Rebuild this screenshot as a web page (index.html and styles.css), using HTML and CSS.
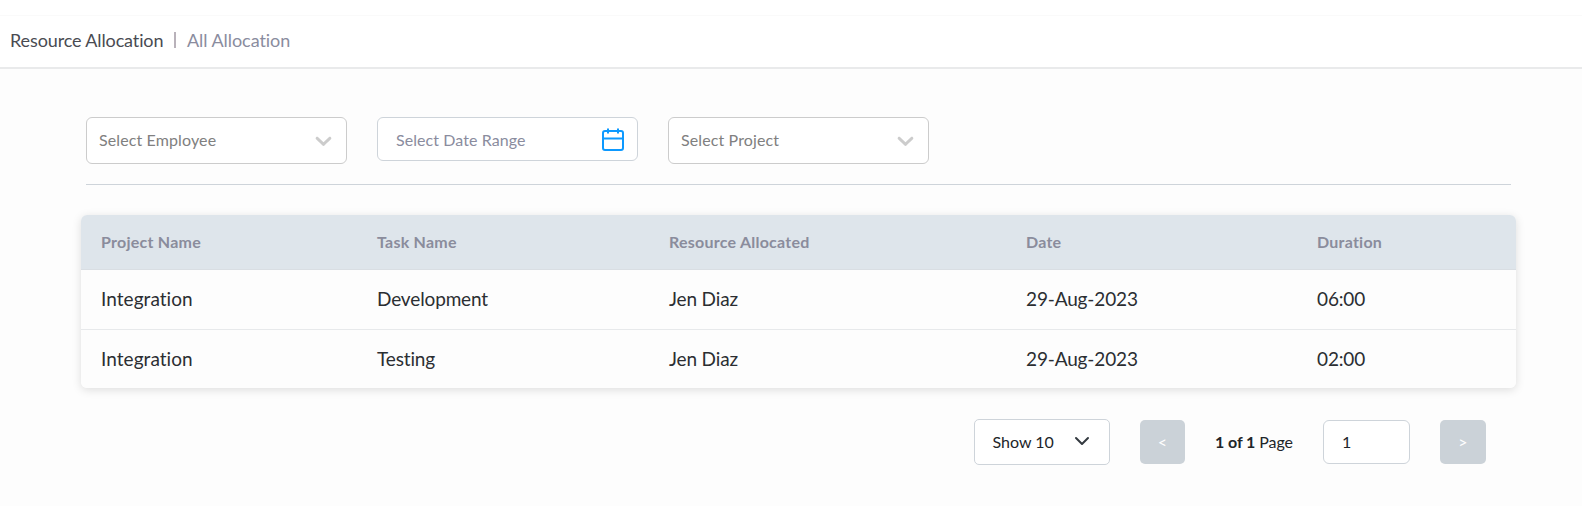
FILE: index.html
```html
<!DOCTYPE html>
<html lang="en">
<head>
<meta charset="utf-8">
<title>Resource Allocation</title>
<link rel="stylesheet" href="styles.css">
</head>
<body>
<header class="topbar">
  <span class="crumb-main">Resource Allocation</span>
  <span class="crumb-sep"></span>
  <span class="crumb-sub">All Allocation</span>
</header>
<main class="content">
  <section class="filters">
    <div class="select">
      <span>Select Employee</span>
      <svg class="select-arrow" viewBox="0 0 20 20"><path d="M4.516 7.548c0.436-0.446 1.043-0.481 1.576 0l3.908 3.747 3.908-3.747c0.533-0.481 1.141-0.446 1.574 0 0.436 0.445 0.408 1.197 0 1.615-0.406 0.418-4.695 4.502-4.695 4.502-0.217 0.223-0.502 0.335-0.787 0.335s-0.57-0.112-0.789-0.335c0 0-4.287-4.084-4.695-4.502s-0.436-1.17 0-1.615z"/></svg>
    </div>
    <div class="date">
      <span>Select Date Range</span>
      <svg class="calendar" viewBox="0 0 22 23"><rect x="1" y="3" width="20" height="19" rx="2"/><path d="M1 10.5h20M6 0.5v5M16 0.5v5"/></svg>
    </div>
    <div class="select">
      <span>Select Project</span>
      <svg class="select-arrow" viewBox="0 0 20 20"><path d="M4.516 7.548c0.436-0.446 1.043-0.481 1.576 0l3.908 3.747 3.908-3.747c0.533-0.481 1.141-0.446 1.574 0 0.436 0.445 0.408 1.197 0 1.615-0.406 0.418-4.695 4.502-4.695 4.502-0.217 0.223-0.502 0.335-0.787 0.335s-0.57-0.112-0.789-0.335c0 0-4.287-4.084-4.695-4.502s-0.436-1.17 0-1.615z"/></svg>
    </div>
  </section>
  <section class="table">
    <div class="row head"><span>Project Name</span><span>Task Name</span><span>Resource Allocated</span><span>Date</span><span>Duration</span></div>
    <div class="row"><span class="project">Integration</span><span>Development</span><span>Jen Diaz</span><span>29-Aug-2023</span><span>06:00</span></div>
    <div class="row"><span class="project">Integration</span><span>Testing</span><span>Jen Diaz</span><span>29-Aug-2023</span><span>02:00</span></div>
  </section>
  <nav class="pager">
    <div class="page-size">
      <span>Show 10</span>
      <svg class="size-arrow" viewBox="0 0 16 16"><path d="M2 5l6 6 6-6"/></svg>
    </div>
    <button class="step prev">&lt;</button>
    <span class="page-info"><b>1 of 1</b> Page</span>
    <div class="page-input">1</div>
    <button class="step next">&gt;</button>
  </nav>
</main>
</body>
</html>
```
FILE: styles.css
```css
* { box-sizing: border-box; }
body {
  margin: 0;
  height: 506px;
  overflow: hidden;
  background: #fdfdfd;
  font-family: Lato, sans-serif;
  font-size: 16px;
  font-variant-ligatures: none;
  color: #212529;
}
.topbar {
  display: flex;
  align-items: center;
  height: 54px;
  margin-top: 15px;
  padding: 0 0 4px 10px;
  background: #fff;
  border-top: 1px solid #fafafa;
  border-bottom: 2px solid #e9eaeb;
  font-size: 18px;
  line-height: 24px;
  letter-spacing: -.12px;
}
body::before {
  content: "";
  display: block;
  height: 15px;
  margin-bottom: -15px;
  background: #fff;
}
.crumb-main { width: 164px; color: #494b52; }
.crumb-sep { width: 2px; height: 16px; margin-right: 11px; background: #b9b2ba; }
.crumb-sub { color: #8a8c9e; letter-spacing: -.05px; }
.content { padding: 48px 66px 0 81px; }
.filters {
  display: flex;
  align-items: flex-start;
  gap: 30px;
  height: 68px;
  margin: 0 5px;
  border-bottom: 1px solid #ced4da;
}
.select, .date {
  display: flex;
  align-items: center;
  justify-content: space-between;
  width: 261px;
  background: #fff;
  border-radius: 6px;
  letter-spacing: .07px;
}
.select {
  height: 47px;
  padding: 0 9px 0 12px;
  border: 1px solid #ccc;
  letter-spacing: .12px;
  color: #808080;
}
.select span { padding-bottom: 2px; }
.select-arrow { width: 27px; height: 27px; fill: #ccc; }
.date {
  height: 44px;
  padding: 0 13px 0 18px;
  border: 1px solid #ced4da;
  color: #8a8c9e;
}
.calendar {
  width: 22px;
  height: 23px;
  fill: none;
  stroke: #0d99ff;
  stroke-width: 2;
}
.table {
  margin-top: 30px;
  border-radius: 6px;
  overflow: hidden;
  box-shadow: 0 2px 10px rgba(0, 0, 0, .13);
}
.row {
  display: grid;
  grid-template-columns: 276px 292px 357px 291px 1fr;
  align-items: center;
  height: 60px;
  padding: 0 0 2px 20px;
  background: #fdfdfd;
  border-bottom: 1px solid #e7e9eb;
  font-size: 19px;
  letter-spacing: -.14px;
  color: #2b2e32;
}
.row .project { letter-spacing: .05px; }
.row:last-child { height: 58px; border-bottom: 0; }
.row.head {
  height: 55px;
  background: #dee5eb;
  border-color: #d9dee3;
  font-size: 16px;
  font-weight: 700;
  letter-spacing: .24px;
  color: #8a8c9c;
}
.pager {
  display: flex;
  align-items: center;
  justify-content: flex-end;
  height: 46px;
  margin: 31px 30px 0 0;
}
.page-size {
  display: flex;
  align-items: center;
  gap: 20px;
  width: 136px;
  height: 46px;
  padding: 0 0 2px 17.5px;
  background: #fff;
  border: 1px solid #ced4da;
  border-radius: 5px;
}
.size-arrow {
  width: 16px;
  height: 16px;
  fill: none;
  stroke: #343a40;
  stroke-width: 2;
  stroke-linecap: round;
  stroke-linejoin: round;
}
.step {
  height: 44px;
  padding: 0 0 2px;
  border: 0;
  border-radius: 5px;
  background: #cbd2d8;
  color: #fff;
  font: 16px Lato, sans-serif;
}
.prev { width: 45px; margin-left: 30px; }
.next { width: 46px; margin-left: 30px; }
.page-info { width: 78px; margin-left: 30px; padding-bottom: 2px; white-space: nowrap; letter-spacing: -.08px; }
.page-input {
  width: 87px;
  height: 44px;
  margin-left: 30px;
  padding-left: 18px;
  background: #fff;
  border: 1px solid #ced4da;
  border-radius: 6px;
  line-height: 41px;
}
```
